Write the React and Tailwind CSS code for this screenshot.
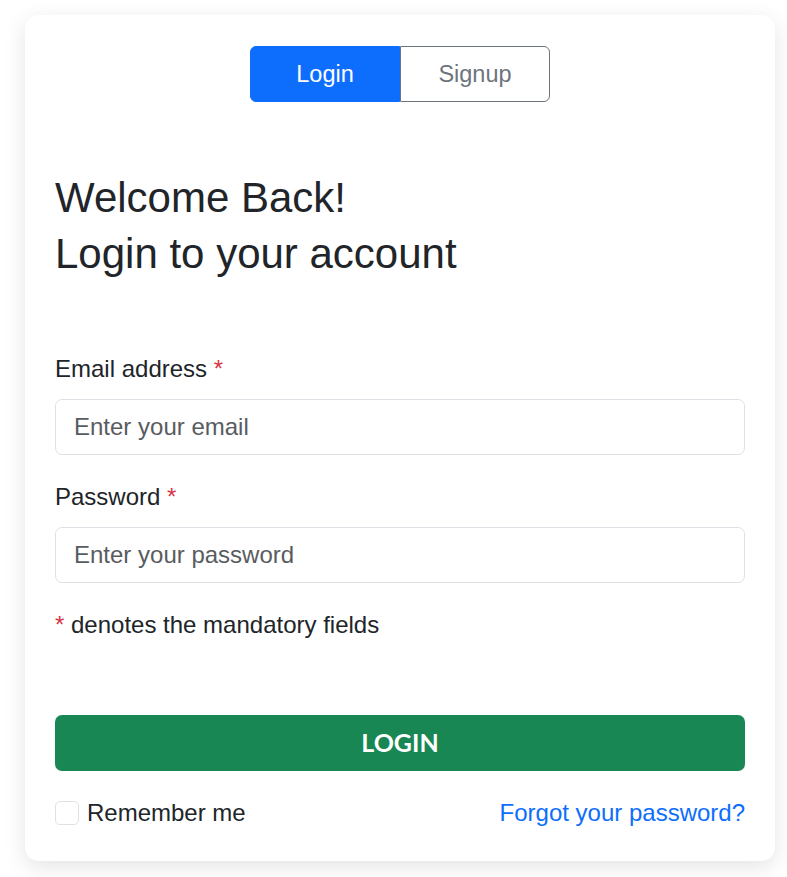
import React from "react";

export default function App() {
  return (
    <div className="min-h-[877px] bg-white pt-[15px] px-[25px]" style={{ fontFamily: '"Liberation Sans", Arial, sans-serif' }}>
      <div className="w-[750px] bg-white rounded-[14px] shadow-[0_6px_22px_rgba(0,0,0,0.11)] pt-[31px] pb-[30px] px-[30px] text-[#212529]">
        <div className="flex justify-center">
          <div className="flex h-[56px]">
            <button className="w-[150px] h-full pt-[2px] bg-[#0d6efd] text-white text-[23.5px] rounded-l-[6px] border border-[#0d6efd]">Login</button>
            <button className="w-[150px] h-full pt-[2px] bg-white text-[#6c757d] text-[23.5px] rounded-r-[6px] border border-[#6c757d]">Signup</button>
          </div>
        </div>

        <div className="mt-[68px] text-[42px] leading-[56px]">
          <div>Welcome Back!</div>
          <div>Login to your account</div>
        </div>

        <div className="mt-[69px]">
          <label className="block text-[24px] leading-[36px] mb-[12px]">
            Email address <span className="text-[#dc3545]">*</span>
          </label>
          <input
            type="email"
            placeholder="Enter your email"
            className="block w-full h-[56px] border border-[#dee2e6] rounded-[7px] px-[18px] text-[24px] placeholder:text-[#595c5f] outline-none"
          />

          <label className="block text-[24px] leading-[36px] mb-[12px] mt-[24px]">
            Password <span className="text-[#dc3545]">*</span>
          </label>
          <input
            type="password"
            placeholder="Enter your password"
            className="block w-full h-[56px] border border-[#dee2e6] rounded-[7px] px-[18px] text-[24px] placeholder:text-[#595c5f] outline-none"
          />

          <div className="mt-[24px] text-[24px] leading-[36px]">
            <span className="text-[#dc3545]">*</span> denotes the mandatory fields
          </div>
        </div>

        <button
          className="mt-[72px] w-full h-[56px] bg-[#198754] text-white rounded-[7px] text-[25px] font-bold"
          style={{ fontFamily: 'Lato, "Open Sans", sans-serif' }}
        >
          LOGIN
        </button>

        <div className="mt-[24px] flex items-center justify-between h-[36px] leading-[36px]">
          <label className="flex items-center gap-[8px] text-[24px]">
            <span className="w-[24px] h-[24px] border border-[#dee2e6] rounded-[5px] bg-white inline-block"></span>
            Remember me
          </label>
          <a className="text-[#0d6efd] text-[24px]">Forgot your password?</a>
        </div>
      </div>
    </div>
  );
}
